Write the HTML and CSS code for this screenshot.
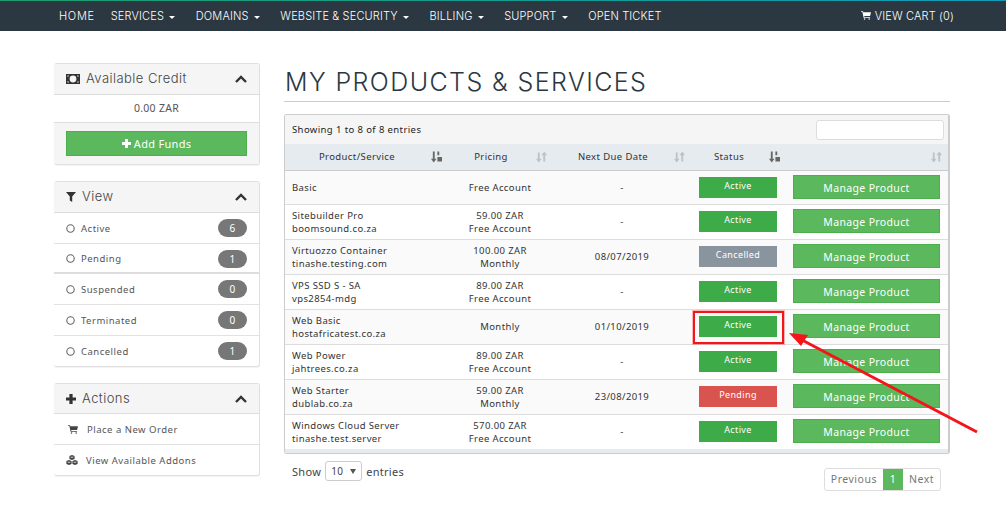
FILE: index.html
```html
<!DOCTYPE html>
<html lang="en">
<head>
<meta charset="utf-8">
<title>My Products &amp; Services</title>
<link rel="stylesheet" href="styles.css">
</head>
<body>
<svg class="defs" width="0" height="0" aria-hidden="true">
  <symbol id="chev" viewBox="0 0 12 8"><path d="M1 7 L6 2 L11 7" fill="none" stroke="currentColor" stroke-width="2.4"/></symbol>
  <symbol id="cart" viewBox="0 0 13 11"><path d="M0 0h2.6l.4 1.2H13l-1.2 5H4.2l.3 1.2h7.3v1H3.4L1.8 1H0z" fill="currentColor"/><circle cx="4.6" cy="10" r="1" fill="currentColor"/><circle cx="10.6" cy="10" r="1" fill="currentColor"/></symbol>
  <symbol id="ring" viewBox="0 0 9 9"><circle cx="4.5" cy="4.5" r="3.7" fill="none" stroke="currentColor" stroke-width="1.1"/></symbol>
  <symbol id="sort" viewBox="0 0 12 12"><path d="M2 0h2v8h2L3 12 0 8h2z" fill="currentColor"/><path d="M7 0h2v4H7zM7 6h5v5H7z" fill="currentColor"/></symbol>
  <symbol id="both" viewBox="0 0 12 12"><path d="M2 1h2v7h2l-3 4-3-4h2z" fill="currentColor"/><path d="M8 11h2V4h2L9 0 6 4h2z" fill="currentColor"/></symbol>
  <symbol id="plus" viewBox="0 0 10 10"><path d="M3.4 0h3.2v3.4H10v3.2H6.6V10H3.4V6.6H0V3.4h3.4z" fill="currentColor"/></symbol>
</svg>

<header class="topbar">
  <nav class="nav">
    <a class="nav-item nav-home">HOME</a>
    <a class="nav-item">SERVICES <i class="caret"></i></a>
    <a class="nav-item">DOMAINS <i class="caret"></i></a>
    <a class="nav-item">WEBSITE &amp; SECURITY <i class="caret"></i></a>
    <a class="nav-item">BILLING <i class="caret"></i></a>
    <a class="nav-item">SUPPORT <i class="caret"></i></a>
    <a class="nav-item">OPEN TICKET</a>
    <a class="nav-item nav-cart"><svg class="ic-cart"><use href="#cart"/></svg> VIEW CART (0)</a>
  </nav>
</header>

<div class="layout">
  <aside class="sidebar">
    <section class="panel">
      <div class="panel-head">
        <svg class="ic-money" viewBox="0 0 14 10"><path fill="currentColor" fill-rule="evenodd" d="M0 0h14v10H0zM7 1.6a3.4 3.4 0 1 0 0 6.8 3.4 3.4 0 0 0 0-6.8zM1.5 1.5v1.6A2 2 0 0 0 3 1.5zM1.5 8.5H3A2 2 0 0 0 1.5 6.9zM12.5 1.5H11a2 2 0 0 0 1.5 1.6zM12.5 8.5V6.9A2 2 0 0 0 11 8.5z"/></svg>
        <span class="panel-title">Available Credit</span>
        <svg class="ic-chev"><use href="#chev"/></svg>
      </div>
      <div class="credit">0.00 ZAR</div>
      <div class="panel-foot"><a class="btn btn-funds"><svg class="ic-plus-s"><use href="#plus"/></svg> Add Funds</a></div>
    </section>

    <section class="panel">
      <div class="panel-head">
        <svg class="ic-filter" viewBox="0 0 10 10"><path fill="currentColor" d="M0 0h10L6.2 4.4V10L3.8 8.4v-4z"/></svg>
        <span class="panel-title">View</span>
        <svg class="ic-chev"><use href="#chev"/></svg>
      </div>
      <div class="side-row"><svg class="ic-ring"><use href="#ring"/></svg><span class="side-label">Active</span><span class="count">6</span></div>
      <div class="side-row side-row-thick"><svg class="ic-ring"><use href="#ring"/></svg><span class="side-label">Pending</span><span class="count">1</span></div>
      <div class="side-row"><svg class="ic-ring"><use href="#ring"/></svg><span class="side-label">Suspended</span><span class="count">0</span></div>
      <div class="side-row"><svg class="ic-ring"><use href="#ring"/></svg><span class="side-label">Terminated</span><span class="count">0</span></div>
      <div class="side-row"><svg class="ic-ring"><use href="#ring"/></svg><span class="side-label">Cancelled</span><span class="count">1</span></div>
    </section>

    <section class="panel">
      <div class="panel-head panel-head-short">
        <svg class="ic-plus"><use href="#plus"/></svg>
        <span class="panel-title">Actions</span>
        <svg class="ic-chev"><use href="#chev"/></svg>
      </div>
      <div class="side-row"><svg class="ic-side-cart"><use href="#cart"/></svg><span class="side-label">Place a New Order</span></div>
      <div class="side-row"><svg class="ic-cubes" viewBox="0 0 12 10"><path fill="currentColor" d="M6 0l2.6 1v3L6 5 3.4 4V1zM3 5l2.6 1v3L3 10 .4 9V6zM9 5l2.6 1v3L9 10 6.4 9V6z"/><path fill="#fff" d="M4.6 1.6l1.4.5 1.4-.5v.7L6 2.8l-1.4-.5zM1.6 6.6l1.4.5 1.4-.5v.7L3 7.8l-1.4-.5zM7.6 6.6l1.4.5 1.4-.5v.7L9 7.8l-1.4-.5z"/></svg><span class="side-label">View Available Addons</span></div>
    </section>
  </aside>

  <main class="main">
    <h1 class="page-title">MY PRODUCTS &amp; SERVICES</h1>
    <div class="table-box">
      <div class="toolbar">
        <span class="info">Showing 1 to 8 of 8 entries</span>
        <input class="search" type="text" aria-label="Search">
      </div>
      <table class="grid">
        <colgroup><col class="c1"><col class="c2"><col class="c3"><col class="c4"><col class="c5"></colgroup>
        <thead>
          <tr>
            <th>Product/Service<svg class="sort on"><use href="#sort"/></svg></th>
            <th>Pricing<svg class="sort"><use href="#both"/></svg></th>
            <th>Next Due Date<svg class="sort"><use href="#both"/></svg></th>
            <th>Status<svg class="sort on"><use href="#sort"/></svg></th>
            <th><svg class="sort"><use href="#both"/></svg></th>
          </tr>
        </thead>
        <tbody>
          <tr class="first"><td class="name">Basic</td><td>Free Account</td><td>-</td><td><span class="status active">Active</span></td><td><a class="btn btn-manage">Manage Product</a></td></tr>
          <tr><td class="name">Sitebuilder Pro<br>boomsound.co.za</td><td>59.00 ZAR<br>Free Account</td><td>-</td><td><span class="status active">Active</span></td><td><a class="btn btn-manage">Manage Product</a></td></tr>
          <tr><td class="name">Virtuozzo Container<br>tinashe.testing.com</td><td>100.00 ZAR<br>Monthly</td><td>08/07/2019</td><td><span class="status cancelled">Cancelled</span></td><td><a class="btn btn-manage">Manage Product</a></td></tr>
          <tr><td class="name">VPS SSD S - SA<br>vps2854-mdg</td><td>89.00 ZAR<br>Free Account</td><td>-</td><td><span class="status active">Active</span></td><td><a class="btn btn-manage">Manage Product</a></td></tr>
          <tr><td class="name">Web Basic<br>hostafricatest.co.za</td><td>Monthly</td><td>01/10/2019</td><td><span class="status active">Active</span></td><td><a class="btn btn-manage">Manage Product</a></td></tr>
          <tr><td class="name">Web Power<br>jahtrees.co.za</td><td>89.00 ZAR<br>Free Account</td><td>-</td><td><span class="status active">Active</span></td><td><a class="btn btn-manage">Manage Product</a></td></tr>
          <tr><td class="name">Web Starter<br>dublab.co.za</td><td>59.00 ZAR<br>Monthly</td><td>23/08/2019</td><td><span class="status pending">Pending</span></td><td><a class="btn btn-manage">Manage Product</a></td></tr>
          <tr><td class="name">Windows Cloud Server<br>tinashe.test.server</td><td>570.00 ZAR<br>Free Account</td><td>-</td><td><span class="status active">Active</span></td><td><a class="btn btn-manage">Manage Product</a></td></tr>
        </tbody>
      </table>
      <div class="table-end"></div>
    </div>
    <div class="table-foot">
      <div class="length">Show <span class="select">10 <i class="select-arrow"></i></span> entries</div>
      <div class="pager"><span class="page">Previous</span><span class="page current">1</span><span class="page">Next</span></div>
    </div>
  </main>
</div>

<div class="callout-box"></div>
<svg class="callout-arrow" viewBox="0 0 1006 508" aria-hidden="true">
  <path d="M977 432 L802 340" stroke="#f4151b" stroke-width="3" fill="none"/>
  <path d="M789 333 L808 335 L801 346 Z" fill="#f4151b"/>
</svg>
</body>
</html>
```
FILE: styles.css
```css
* { box-sizing: border-box; }
html, body { margin: 0; padding: 0; }
body {
  position: relative;
  height: 508px;
  overflow: hidden;
  background: #fff;
  color: #333;
  font-family: "Noto Sans", "DejaVu Sans", sans-serif;
  font-size: 10px;
}
.defs { position: absolute; }

/* top bar */
.topbar {
  height: 31px;
  background: #2b3741;
  border-top: 1px solid;
  border-image: linear-gradient(90deg, #1d9d6c, #0f9bb8) 1;
}
.nav { display: flex; align-items: center; height: 30px; padding-left: 59px; padding-right: 52px; }
.nav-item {
  color: #fff;
  font-family: Inter, "Open Sans", sans-serif;
  font-size: 11px;
  font-weight: 300;
  letter-spacing: .15px;
  white-space: nowrap;
  margin-right: 20.5px;
}
.nav-home { letter-spacing: .7px; margin-right: 16px; }
.caret {
  display: inline-block;
  width: 0; height: 0;
  margin-left: 2px;
  vertical-align: middle;
  border-top: 3px solid #fff;
  border-left: 3px solid transparent;
  border-right: 3px solid transparent;
}
.nav-cart { margin-left: auto; margin-right: 0; }
.ic-cart { width: 10px; height: 9px; color: #fff; }

/* layout */
.layout { display: grid; grid-template-columns: 206px 666px; column-gap: 24px; padding: 32px 0 0 54px; }

/* sidebar */
.sidebar { display: flex; flex-direction: column; gap: 16px; }
.panel {
  background: #fff;
  border: 1px solid #e0e0e0;
  border-left: 0;
  border-radius: 3px;
  box-shadow: 0 1px 1px rgba(0,0,0,.05);
}
.panel-head {
  display: flex; align-items: center;
  height: 31px;
  padding: 0 12px;
  background: #f5f5f5;
  border-bottom: 1px solid #ddd;
}
.panel-head-short { height: 30px; }
.panel-title { flex: 1; padding-bottom: 2px; font-family: Inter, "Open Sans", sans-serif; font-weight: 300; font-size: 13px; letter-spacing: .45px; color: #444; margin-left: 6px; }
.ic-money { width: 14px; height: 10px; color: #333; }
.ic-filter { width: 10px; height: 10px; color: #333; }
.ic-plus { width: 10px; height: 10px; color: #333; }
.ic-chev { width: 12px; height: 8px; color: #333; }
.credit { height: 28px; line-height: 27px; text-align: center; font-size: 10.5px; color: #555; letter-spacing: .3px; border-bottom: 1px solid #ddd; }
.panel-foot { height: 41px; padding: 8px 12px; background: #f5f5f5; }
.btn { display: block; color: #fff; text-align: center; background: #5cb85c; border: 1px solid #4cae4c; }
.btn-funds { height: 25px; line-height: 23px; font-size: 11px; letter-spacing: .3px; }
.ic-plus-s { width: 9px; height: 9px; color: #fff; }

.side-row {
  display: flex; align-items: center;
  height: 31px;
  padding: 0 12px;
  border-bottom: 1px solid #e2e2e2;
  color: #555;
  letter-spacing: .5px;
  font-size: 9.5px;
}
.side-row:last-child { border-bottom: 0; height: 30px; }
.side-row-thick { height: 30px; padding-top: 1px; border-bottom: 2px solid #ddd; }
.side-label { flex: 1; }
.ic-ring { width: 9px; height: 9px; margin-right: 6px; color: #666; }
.ic-side-cart { width: 10px; height: 9px; margin: 0 9px 0 2px; color: #444; }
.ic-cubes { width: 12px; height: 10px; margin-right: 8px; color: #444; }
.count {
  width: 29px; height: 18px;
  line-height: 18px;
  text-align: center;
  border-radius: 9px;
  background: #777;
  color: #fff;
  font-size: 10px;
}

/* main */
.page-title {
  margin: 0 0 12px;
  height: 39px;
  line-height: 39px;
  padding-left: 1px;
  border-bottom: 1px solid #ccc;
  font-family: Inter, "Open Sans", sans-serif;
  font-weight: 300;
  font-size: 25px;
  letter-spacing: 1.42px;
  color: #2b3741;
}
.table-box { border: 1px solid #ccc; border-right-width: 2px; border-radius: 3px; width: 666px; overflow: hidden; }
.toolbar {
  display: flex; align-items: center; justify-content: space-between;
  height: 29px;
  padding: 0 4px 0 7px;
  background: #f5f5f5;
}
.info { font-size: 9.5px; color: #222; letter-spacing: .4px; }
.search { width: 128px; height: 20px; padding: 0; background: #fff; border: 1px solid #ddd; border-radius: 3px; }
.grid { width: 100%; border-collapse: collapse; table-layout: fixed; }
.c1 { width: 162px; }
.c2 { width: 106px; }
.c3 { width: 138px; }
.c4 { width: 94px; }
.grid th {
  position: relative;
  height: 26px;
  padding: 0 18px 0 0;
  background: #e6ebef;
  border-bottom: 1px solid #ccc;
  font-weight: 400;
  font-size: 9.5px;
  letter-spacing: .4px;
  color: #333;
  text-align: center;
}
.sort { position: absolute; top: 7px; right: 6px; width: 11px; height: 12px; color: #bcc2c6; }
.sort.on { right: 5px; color: #666; }
.grid td {
  height: 35px;
  padding: 0;
  border-bottom: 1px solid #ddd;
  text-align: center;
  font-size: 9.5px;
  line-height: 13px;
  letter-spacing: .38px;
  color: #333;
}
.grid tr.first td { height: 34px; }
.grid tbody tr:nth-child(odd) { background: #fafafa; }
.grid tbody tr:last-child td { border-bottom: 0; }
.grid td.name { text-align: left; padding-left: 7px; }
.status {
  display: block;
  width: 78px; height: 21px;
  margin: 0 auto;
  padding-top: 2px;
  line-height: 13px;
  font-size: 9px;
  color: #fff;
}
.active { background: #3cab48; }
.cancelled { background: #89949f; }
.pending { background: #d9534f; }
.btn-manage { width: 147px; height: 24px; margin: 0 0 2px 8px; line-height: 24px; font-size: 10.5px; letter-spacing: .35px; }
.first .btn-manage { margin-bottom: 0; }
.table-end { height: 4px; background: #e6ebef; }

.table-foot { display: flex; justify-content: space-between; align-items: flex-start; padding: 7px 9px 0 8px; width: 666px; }
.length { font-size: 11px; color: #444; letter-spacing: .3px; display: flex; align-items: center; gap: 4px; }
.select {
  display: inline-flex; align-items: center; justify-content: space-between;
  width: 37px; height: 20px;
  padding: 0 5px;
  border: 1px solid #ccc;
  border-radius: 3px;
  font-size: 10px;
}
.select-arrow { width: 0; height: 0; border-top: 5px solid #555; border-left: 3px solid transparent; border-right: 3px solid transparent; }
.pager { display: flex; margin-top: 7px; border: 1px solid #ddd; border-radius: 3px; height: 23px; }
.page { height: 21px; line-height: 21px; padding: 0 6px; font-size: 10.5px; letter-spacing: .5px; color: #777; }
.page.current { background: #5cb85c; color: #fff; width: 20px; text-align: center; padding: 0; }

/* annotation */
.callout-box {
  position: absolute;
  left: 693px; top: 311px;
  width: 91px; height: 33px;
  border: 2px solid #f4151b;
  box-shadow: 0 0 0 1px rgba(244,21,27,.3);
}
.callout-arrow { position: absolute; left: 0; top: 0; width: 1006px; height: 508px; pointer-events: none; }
```
